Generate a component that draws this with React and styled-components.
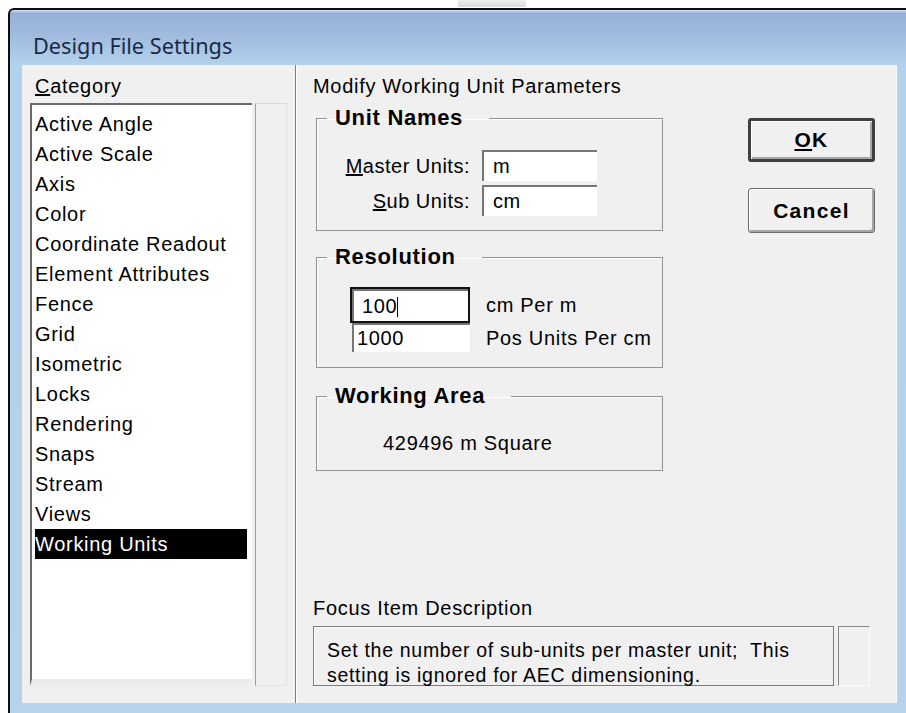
import React from "react";
import styled, { createGlobalStyle } from "styled-components";

const GlobalStyle = createGlobalStyle`
  html, body {
    margin: 0;
    padding: 0;
    background: #fff;
  }
  body {
    width: 906px;
    height: 713px;
    overflow: hidden;
    font-family: "Liberation Sans", Arial, sans-serif;
    color: #000;
  }
`;

const Screen = styled.div`
  width: 906px;
  height: 713px;
  display: flex;
  flex-direction: column;
`;

// thin strip of desktop above the window
const TopStrip = styled.div`
  height: 8px;
  flex: none;
  display: flex;
  padding-left: 458px;
`;

const StripTab = styled.div`
  width: 68px;
  height: 7px;
  background: linear-gradient(180deg, #e2e2e2, #b9b9b9);
  opacity: 0.55;
`;

const Window = styled.div`
  flex: 1;
  margin-left: 8px;
  display: flex;
  flex-direction: column;
  border-top: 2px solid #0e0e0e;
  border-left: 2px solid #0e0e0e;
  border-top-left-radius: 6px;
  background: linear-gradient(
    180deg,
    #dde6f3 0px,
    #98afd7 3px,
    #a2bde0 28px,
    #b3d2ec 55px,
    #b7d2eb 100%
  );
  padding: 0 9px 10px 12px;
`;

const TitleBar = styled.div`
  height: 55px;
  flex: none;
  box-sizing: border-box;
  padding: 23px 0 0 11px;
  font-family: "Noto Sans", "Open Sans", sans-serif;
  font-size: 21.7px;
  line-height: 26px;
  color: #1b2947;
`;

const Client = styled.div`
  flex: 1;
  display: flex;
  background: #f0f0f0;
  box-shadow: inset -1px 0 0 #fafafa;
`;

const Text = styled.div`
  font-size: 20px;
  letter-spacing: 0.7px;
  line-height: 20px;
  white-space: nowrap;
`;

const LeftPane = styled.div`
  width: 273px;
  flex: none;
  box-sizing: border-box;
  padding: 11px 0 0 8px;
  display: flex;
  flex-direction: column;
`;

const PaneLabel = styled(Text)`
  padding-left: 5px;
  margin-bottom: 7px;
`;

const ListFrame = styled.div`
  display: flex;
  height: 583px;
  width: 259px;
`;

const ListBox = styled.ul`
  list-style: none;
  margin: 0;
  width: 222px;
  box-sizing: border-box;
  padding: 4px 5px 0 3px;
  background: #fff;
  border-top: 2px solid #6b6b6b;
  border-left: 2px solid #6b6b6b;
  border-bottom: 7px solid #ececec;
`;

const ListItem = styled.li`
  height: 30px;
  line-height: 30px;
  font-size: 20px;
  letter-spacing: 0.7px;
  white-space: nowrap;
  background: ${(p) => (p.$selected ? "#000" : "transparent")};
  color: ${(p) => (p.$selected ? "#fff" : "#000")};
`;

const ScrollTrack = styled.div`
  margin-left: 3px;
  width: 32px;
  box-sizing: border-box;
  background: #f0f0f0;
  border-left: 1px solid #9c9c9c;
  border-top: 1px solid #d8d8d8;
  border-right: 1px solid #e4e4e4;
  border-bottom: 1px solid #e4e4e4;
`;

const RightPane = styled.div`
  flex: 1;
  display: flex;
  flex-direction: column;
  box-sizing: border-box;
  padding: 11px 0 17px 17px;
  border-left: 1px solid #7d7d7d;
  box-shadow: inset 1px 0 0 #fff;
`;

const TopRow = styled.div`
  display: flex;
  margin-top: 10px;
`;

const Groups = styled.div`
  width: 347px;
  margin-left: 3px;
  display: flex;
  flex-direction: column;
  gap: 14px;
`;

const Group = styled.fieldset`
  margin: 0;
  min-width: 0;
  border: 1px solid #929292;
  box-shadow: inset 1px 1px 0 #fff;
  padding: ${(p) => p.$pad};
`;

const Legend = styled.legend`
  padding: 0 26px 0 8px;
  margin-left: ${(p) => p.$shift || 2}px;
  font-size: 22px;
  font-weight: bold;
  letter-spacing: 0.7px;
  line-height: 24px;
`;

const NameGrid = styled.div`
  display: grid;
  grid-template-columns: 145px 115px;
  column-gap: 12px;
  row-gap: 4px;
  align-items: center;
`;

const FieldLabel = styled(Text)`
  text-align: right;
  letter-spacing: 0.5px;
`;

const Field = styled.div`
  height: ${(p) => p.$h || 31}px;
  box-sizing: border-box;
  background: #fff;
  border-top: 2px solid #767676;
  border-left: 2px solid #767676;
  margin-left: ${(p) => p.$offset || 0}px;
  padding-left: ${(p) => p.$indent || 9}px;
  font-size: 20px;
  letter-spacing: 0.6px;
  line-height: ${(p) => (p.$h || 31) - 2}px;
  white-space: nowrap;
`;

const FocusRing = styled.div`
  height: 36px;
  box-sizing: border-box;
  border: 2px solid #111;
`;

const Caret = styled.span`
  display: inline-block;
  width: 1px;
  height: 20px;
  background: #000;
  vertical-align: -4px;
`;

const ResolutionGrid = styled.div`
  display: grid;
  grid-template-columns: 120px auto;
  column-gap: 16px;
  align-items: center;
`;

const Buttons = styled.div`
  margin-left: 85px;
  padding-top: 12px;
  display: flex;
  flex-direction: column;
  gap: 26px;
`;

const Button = styled.div`
  width: 127px;
  height: ${(p) => (p.$default ? 44 : 45)}px;
  box-sizing: border-box;
  display: flex;
  align-items: center;
  justify-content: center;
  background: #f0f0f0;
  border: ${(p) => (p.$default ? "3px solid #3f3f3f" : "1px solid #6a6a6a")};
  border-radius: 3px;
  box-shadow: inset 1px 1px 0 #fff, inset -2px -2px 0 #a5a5a5;
  font-size: 21px;
  font-weight: bold;
  letter-spacing: 1.3px;
`;

const Area = styled(Text)`
  margin-left: 58px;
  line-height: 24px;
`;

const FocusSection = styled.div`
  margin-top: auto;
  display: flex;
  flex-direction: column;
  gap: 8px;
`;

const FocusRow = styled.div`
  display: flex;
  gap: 4px;
`;

const FocusBox = styled.div`
  width: 521px;
  height: 60px;
  box-sizing: border-box;
  border: 1px solid #7c7c7c;
  box-shadow: inset 1px 1px 0 #fff;
  padding: 11px 0 0 13px;
  font-size: 19.5px;
  letter-spacing: 0.7px;
  line-height: 25px;
  white-space: nowrap;
`;

const FocusStub = styled.div`
  width: 32px;
  height: 60px;
  box-sizing: border-box;
  border-top: 1px solid #8a8a8a;
  border-left: 1px solid #8a8a8a;
  border-right: 1px solid #fbfbfb;
  border-bottom: 1px solid #fbfbfb;
`;

const categories = [
  "Active Angle",
  "Active Scale",
  "Axis",
  "Color",
  "Coordinate Readout",
  "Element Attributes",
  "Fence",
  "Grid",
  "Isometric",
  "Locks",
  "Rendering",
  "Snaps",
  "Stream",
  "Views",
  "Working Units",
];

export default function App() {
  return (
    <Screen>
      <GlobalStyle />
      <TopStrip>
        <StripTab />
      </TopStrip>
      <Window>
        <TitleBar>Design File Settings</TitleBar>
        <Client>
          <LeftPane>
            <PaneLabel>
              <u>C</u>ategory
            </PaneLabel>
            <ListFrame>
              <ListBox>
                {categories.map((c) => (
                  <ListItem key={c} $selected={c === "Working Units"}>
                    {c}
                  </ListItem>
                ))}
              </ListBox>
              <ScrollTrack />
            </ListFrame>
          </LeftPane>

          <RightPane>
            <Text>Modify Working Unit Parameters</Text>
            <TopRow>
              <Groups>
                <Group $pad="20px 0 14px 8px">
                  <Legend>Unit Names</Legend>
                  <NameGrid>
                    <FieldLabel>
                      <u>M</u>aster Units:
                    </FieldLabel>
                    <Field>m</Field>
                    <FieldLabel>
                      <u>S</u>ub Units:
                    </FieldLabel>
                    <Field>cm</Field>
                  </NameGrid>
                </Group>

                <Group $pad="18px 0 15px 33px">
                  <Legend $shift={-23}>Resolution</Legend>
                  <ResolutionGrid>
                    <FocusRing>
                      <Field $h={32} $indent={8}>
                        100
                        <Caret />
                      </Field>
                    </FocusRing>
                    <Text>cm Per m</Text>
                    <Field $h={29} $indent={3} $offset={2}>
                      1000
                    </Field>
                    <Text>Pos Units Per cm</Text>
                  </ResolutionGrid>
                </Group>

                <Group $pad="23px 0 15px 8px" style={{ marginTop: 2 }}>
                  <Legend>Working Area</Legend>
                  <Area>429496 m Square</Area>
                </Group>
              </Groups>

              <Buttons>
                <Button $default>
                  <u>O</u>K
                </Button>
                <Button>Cancel</Button>
              </Buttons>
            </TopRow>

            <FocusSection>
              <Text>Focus Item Description</Text>
              <FocusRow>
                <FocusBox>
                  Set the number of sub-units per master unit;&nbsp; This
                  <br />
                  setting is ignored for AEC dimensioning.
                </FocusBox>
                <FocusStub />
              </FocusRow>
            </FocusSection>
          </RightPane>
        </Client>
      </Window>
    </Screen>
  );
}
